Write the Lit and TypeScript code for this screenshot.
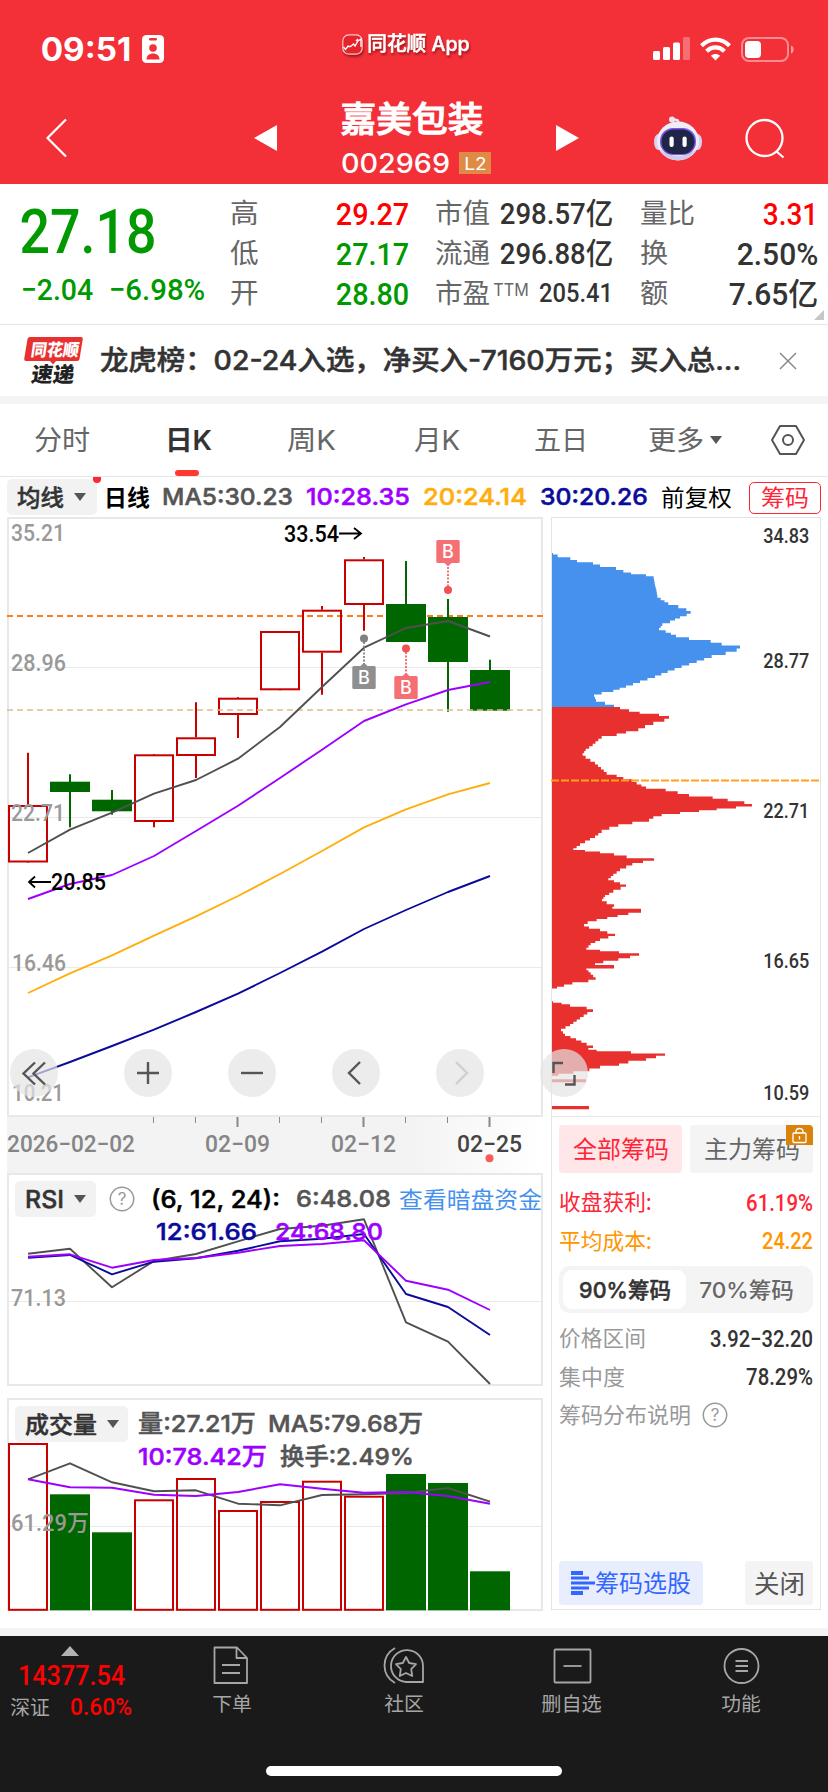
import { LitElement, html, svg, css } from "lit";
import { customElement } from "lit/decorators.js";

type Pt = [number, number];

/* A single line of text condensed or stretched to an exact width. */
const fit = (text: string, w: number, size: number, cls = "") => html`<svg
  class="fit ${cls}" width=${w} height=${size} viewBox="0 0 ${w} ${size}">
  <text x=${-0.04 * size} y=${size * 0.5 + size * 0.36} font-size=${size}
    textLength=${w + 0.08 * size} lengthAdjust="spacingAndGlyphs">${text}</text></svg>`;

/* Text inside a chart: left edge, cap-centre y, width, size. */
const label = (text: string, x: number, cy: number, w: number, size: number, cls = "") => svg`<text
  class=${cls} x=${x - 0.04 * size} y=${cy + size * 0.36} font-size=${size}
  textLength=${w + 0.08 * size} lengthAdjust="spacingAndGlyphs">${text}</text>`;

const X0 = 28;
const DX = 42;
const line = (ys: number[], cls: string) => svg`<polyline class="ln ${cls}" points=${ys
  .map((y, i) => `${X0 + i * DX},${y}`).join(" ")}></polyline>`;

/* up?, body top, body bottom, high, low */
const CANDLES: [boolean, number, number, number, number][] = [
  [true, 805, 862.5, 752.7, 862], [false, 781.7, 792, 774.3, 827.3], [false, 799.7, 811.3, 790, 814.7],
  [true, 754.3, 822, 755, 827.3], [true, 737.3, 756, 702.3, 778], [true, 697.7, 715, 697, 738],
  [true, 631, 690.3, 632, 690], [true, 609.7, 652.7, 606, 694.7], [true, 559.3, 605, 557, 630.7],
  [false, 604, 642, 561, 642], [false, 617, 662, 599, 711.7], [false, 670, 710.7, 659.7, 710],
];
const VOLUMES = [1443, 1494.3, 1532.3, 1499.3, 1478, 1510, 1501, 1480.7, 1495.7, 1474, 1483, 1571.3];

const MA5 = [853, 829.7, 812.7, 793.7, 780, 758.7, 727, 687, 647.7, 628, 621, 636.5];
const MA10 = [899, 884, 875, 856, 831, 805.7, 778, 749.7, 721, 704.3, 690, 682];
const MA20 = [993, 973.3, 955.3, 935.7, 916.3, 896, 874, 851, 827.3, 809.3, 794.3, 783];
const MA30 = [1077.3, 1062, 1046, 1029.7, 1012, 993.7, 973, 951.7, 929, 910, 892, 876];
const RSI6 = [1253.7, 1248.7, 1287.3, 1261, 1254, 1241.3, 1229, 1225.7, 1219.3, 1322.3, 1341.7, 1384];
const RSI12 = [1257.7, 1255, 1274.3, 1261.7, 1258.3, 1250.7, 1241.3, 1238.7, 1234, 1294, 1307, 1335];
const RSI24 = [1256.7, 1254.3, 1267.7, 1260, 1258, 1252.7, 1246, 1244, 1240.3, 1280.7, 1289.7, 1310];
const VMA5 = [1479.3, 1463.3, 1482.3, 1491.3, 1490.3, 1503.7, 1505.3, 1495, 1494.3, 1493, 1488, 1501.7];
const VMA10 = [1479.3, 1487.3, 1487.7, 1494.7, 1496, 1492, 1484.3, 1488.7, 1492.7, 1492, 1496, 1503.7];

/* Chip distribution, in thirds of a pixel: y, right edge. */
const CHIPS_UP: Pt[] = [[130, 24], [137, 38], [146, 76], [154, 96], [160, 144], [167, 165], [175, 213], [185, 235],
  [190, 258], [195, 303], [203, 326], [225, 330], [240, 334], [258, 337], [268, 347], [280, 370], [290, 400],
  [299, 424], [307, 437], [315, 425], [322, 405], [335, 375], [345, 352], [357, 342], [365, 362], [377, 393],
  [386, 432], [394, 497], [402, 530], [411, 585], [420, 575], [430, 542], [440, 500], [455, 455], [470, 410],
  [485, 368], [500, 330], [515, 285], [530, 243], [542, 205], [550, 170], [557, 147], [570, 153], [580, 180], [588, 207]];
const CHIPS_LOW: Pt[] = [[594, 225], [602, 252], [608, 284], [614, 342], [622, 372], [630, 358], [640, 325], [650, 300],
  [660, 280], [667, 243], [674, 215], [682, 170], [690, 160], [705, 143], [720, 122], [732, 113], [742, 122],
  [760, 150], [775, 168], [790, 185], [798, 215], [804, 235], [812, 262], [820, 275], [833, 303], [840, 362],
  [848, 398], [856, 432], [863, 503], [870, 548], [878, 598], [886, 621], [893, 573], [898, 515], [903, 462],
  [909, 405], [915, 350], [922, 325], [930, 312], [940, 262], [946, 220], [954, 193], [965, 170], [980, 150],
  [995, 120], [1005, 105], [1018, 85], [1022, 120], [1027, 165], [1033, 207], [1040, 245], [1049, 327], [1056, 294],
  [1062, 262], [1080, 225], [1095, 205], [1108, 190], [1113, 207], [1120, 225], [1127, 243], [1134, 227],
  [1145, 205], [1158, 180], [1170, 171], [1178, 185], [1187, 207], [1194, 202], [1199, 288], [1204, 288],
  [1212, 250], [1218, 218], [1224, 187], [1230, 155], [1237, 128], [1247, 117], [1252, 132], [1260, 165],
  [1267, 187], [1275, 210], [1281, 190], [1290, 165], [1302, 137], [1317, 124], [1321, 165], [1326, 222],
  [1334, 282], [1341, 255], [1348, 220], [1357, 175], [1363, 150], [1367, 207], [1373, 207], [1378, 124],
  [1390, 137], [1406, 152], [1413, 130], [1420, 82], [1427, 57], [1434, 36], [1437, 21], [1472, 21], [1476, 24],
  [1480, 50], [1486, 75], [1494, 125], [1502, 144], [1510, 127], [1525, 105], [1545, 75], [1560, 48], [1575, 60],
  [1588, 93], [1602, 125], [1611, 144], [1617, 130], [1621, 155], [1627, 258], [1634, 360], [1641, 333], [1648, 303],
  [1657, 250], [1664, 222], [1671, 165], [1680, 133], [1688, 85], [1695, 40], [1699, 21]];

const stepPath = (src: Pt[], top: number, bottom: number) => {
  const pts: Pt[] = [];
  src.forEach((p, i) => {
    pts.push(p);
    const n = src[i + 1];
    if (!n || n[0] - p[0] < 11 || (p[1] === 21 && n[1] === 21)) return;
    const k = Math.round((n[0] - p[0]) / 7.5);
    for (let j = 1; j < k; j++) pts.push([p[0] + ((n[0] - p[0]) * j) / k, p[1] + ((n[1] - p[1]) * j) / k]);
  });
  let d = `M552 ${top}`;
  pts.forEach((p, i) => {
    const x = 545 + p[1] / 3;
    const end = i < pts.length - 1 ? 510 + (p[0] + pts[i + 1][0]) / 6 : bottom;
    d += `H${x.toFixed(2)}V${end.toFixed(2)}`;
  });
  return d + "H552Z";
};

const caret = html`<svg class="caret" width="12" height="8" viewBox="0 0 12 8"><path d="M0 0H12L6 8Z" fill="#555"/></svg>`;
const help = html`<svg class="help" width="26" height="26" viewBox="0 0 26 26"><circle cx="13" cy="13" r="11.7" fill="none" stroke="#999" stroke-width="1.5"/><text x="13" y="19" text-anchor="middle" font-size="17" fill="#999" font-family="Inter">?</text></svg>`;

@customElement("app-root")
export class AppRoot extends LitElement {
  static styles = css`
    :host { display: block; width: 828px; height: 1792px; overflow: hidden; background: #fff; font-family: Inter, "Noto Sans CJK SC", sans-serif; color: #333; }
    * { box-sizing: border-box; }
    svg { display: block; overflow: visible; flex: none; }
    .fit text { fill: currentColor; }
    .num { font-family: Roboto, "Noto Sans CJK SC", sans-serif; font-weight: 500; }
    .cjk { font-family: "Noto Sans CJK SC", sans-serif; }
    .w5 { font-weight: 500; } .w6 { font-weight: 600; } .w7 { font-weight: 700; }
    .w55 { font-weight: 500; } .w55 text { stroke: currentColor; stroke-width: .5px; }
    .w58 { font-weight: 500; } .w58 text { stroke: currentColor; stroke-width: 1px; }
    .red { color: #ff0000; fill: #ff0000; } .green { color: #009900; } .dark { color: #333; fill: #333; } .gray { color: #666; }
    .c5 { color: #555; } .c10 { color: #9d00ff; } .c20 { color: #ffae0c; } .c30 { color: #0a0a9b; } .blk { color: #000; fill: #000; }
    .lite { color: #999; } .rose { color: #ff2436; } .amber { color: #ff9500; } .sky { color: #4691ee; }

    .top { height: 184px; background: #f32f38; color: #fff; }
    .status { height: 98px; display: grid; grid-template-columns: 100px 200px 311px 47px 41px 1fr; padding: 0 0 0 42px; align-items: center; }
    .apptag { display: flex; gap: 5px; align-items: center; margin-top: -10px; filter: drop-shadow(1px 2px 1px rgba(90,0,0,.55)); }
    .nav { height: 86px; display: grid; grid-template-columns: 207px 88px 214px 98px 48px 1fr; padding-left: 47px; }
    .nav > svg { margin-top: 27px; }
    .nav > .back { margin-top: 20px; }
    .nav > .robot { margin-top: 18px; }
    .nav > .find { margin-top: 20px; margin-left: 43px; }
    .ttl { display: flex; flex-direction: column; padding-top: 4px; gap: 15px; }
    .code { display: flex; gap: 10px; align-items: center; height: 22px; }
    .l2 { width: 32px; height: 22px; background: #e08b45; display: flex; align-items: center; justify-content: center; }

    .quote { height: 141px; border-bottom: 1px solid #e6e6e6; display: grid; grid-template-columns: 180px 177px 176px 176px; column-gap: 28.5px; padding-left: 22px; position: relative; }
    .px { padding-top: 17px; display: flex; flex-direction: column; gap: 12px; }
    .chg { display: flex; gap: 18px; }
    .col { padding-top: 9px; }
    .cell { height: 40px; display: flex; align-items: center; justify-content: space-between; }
    .ttm { margin: -7px 7px 0 -1px; }
    .corner { position: absolute; right: 4px; bottom: 4px; }

    .news { height: 71px; display: grid; grid-template-columns: 77px 679px 1fr; padding-left: 24px; align-items: center; }
    .band { height: 8px; background: #f4f4f4; }
    .tabs { height: 73px; border-bottom: 1px solid #e6e6e6; display: grid; grid-template-columns: 131px 122px 127px 120px 114px 122px 1fr; padding-left: 35px; align-items: center; position: relative; }
    .more { display: flex; gap: 7px; align-items: center; }
    .ind { position: absolute; left: 175px; bottom: 0; width: 24px; height: 6px; border-radius: 3px; background: #ff3b30; }
    .mas { height: 40px; display: grid; grid-template-columns: 98px 58px 144px 117px 117px 121px 87px 72px; padding-left: 7px; align-items: center; position: relative; }
    .sel { background: #f2f2f2; border-radius: 5px; height: 36px; display: flex; align-items: center; gap: 11px; padding-left: 11px; }
    .sel.s1 { width: 90px; } .sel.s2 { width: 81px; } .sel.s3 { width: 113px; }
    .dot { position: absolute; left: 93px; top: 0; width: 8px; height: 6px; background: #ff2436; border-radius: 0 0 4px 4px; }
    .pill { height: 32px; border: 1.5px solid #ff2436; border-radius: 5px; display: flex; align-items: center; justify-content: center; margin-top: 1px; }

    .main { display: grid; grid-template-columns: 536px 270px; column-gap: 8px; padding-left: 7px; height: 1111px; }
    .left { display: flex; flex-direction: column; }
    .panel { border: 2px solid #e8e8e8; position: relative; }
    .k { height: 600px; } .rsi { height: 213px; } .vol { height: 213px; margin-top: 12px; }
    .panel > svg.chart { margin: -2px; }
    .axis { height: 56px; background: linear-gradient(90deg, #f3f3f3 0 75%, #fff 100%); }
    .leg { position: absolute; left: 6px; top: 6px; display: flex; flex-direction: column; gap: 0; }
    .row { display: flex; align-items: center; height: 36px; }
    .row2 { display: flex; align-items: center; height: 29px; }
    .tools { position: absolute; left: 1px; top: 530px; display: flex; gap: 56px; z-index: 2; }
    .btn { width: 48px; height: 48px; border-radius: 50%; background: rgba(228,228,228,.7); }
    .tools .btn:first-child { margin-right: 10px; }
    .g1 { gap: 0; } .g1 .help { margin: 0 17px 0 13px; } .g1 .m1 { margin-right: 18px; } .g1 .m2 { margin-right: 10px; }
    .g2 { padding-left: 142px; gap: 20px; }
    .g3 { gap: 14px; } .g3 .sel { margin-right: -3px; }
    .g4 { padding-left: 124px; gap: 15px; margin-top: 1px; height: 27px; }
    .ln { fill: none; stroke-width: 1.9; stroke-linejoin: round; }
    .s5 { stroke: #505050; } .s10 { stroke: #9d00ff; } .s20 { stroke: #ffae0c; } .s30 { stroke: #0a0a9b; }
    .ax { fill: #999; font-family: Roboto, "Noto Sans CJK SC"; font-weight: 500; }
    .dt { fill: #858585; font-family: Roboto; font-weight: 500; } .dt.on { fill: #444; }
    .grid { stroke: #e9e9e9; stroke-width: 1; }
    .mk { font-family: Inter; font-weight: 500; fill: #fff; font-size: 18px; text-anchor: middle; }

    .right { border: 1px solid #e3e3e3; height: 1093px; display: flex; flex-direction: column; }
    .chips { height: 599px; border-bottom: 1px solid #e8e8e8; }
    .chips > svg { margin: -1px; }
    .info { flex: 1; padding: 8px 7px 4px 7px; display: flex; flex-direction: column; }
    .two { display: flex; gap: 8px; }
    .tab { width: 123px; height: 48px; border-radius: 4px; display: flex; align-items: center; justify-content: center; background: #f4f4f4; position: relative; }
    .tab.on { background: #ffe7e9; }
    .lock { position: absolute; right: 0; top: 0; width: 27px; height: 20px; background: #d9820c; border-radius: 0 4px 0 0; }
    .kv { display: flex; justify-content: space-between; align-items: center; height: 38.5px; padding: 0 1px; }
    .kvs { padding-top: 10px; }
    .seg { height: 47px; border-radius: 11px; background: #f4f4f4; display: flex; padding: 4px; margin: 6px 0 6px; align-items: center; }
    .segon { width: 123px; height: 39px; background: #fff; border-radius: 9px; display: flex; align-items: center; justify-content: center; margin-right: 14px; }
    .expl { justify-content: flex-start; gap: 12px; }
    .foot { margin-top: auto; display: flex; justify-content: space-between; }
    .pick { width: 144px; height: 44px; border-radius: 4px; background: #e8eefe; color: #3366ff; display: flex; align-items: center; padding-left: 12px; gap: 1px; }
    .close { width: 68px; height: 44px; border-radius: 4px; background: #f4f4f4; color: #555; display: flex; align-items: center; justify-content: center; }

    .bar { height: 156px; background: #1a1a1a; color: #a6a6a6; display: grid; grid-template-columns: 202px 171px 158px 180px 1fr; padding-left: 11px; position: relative; }
    .idx { padding-top: 10px; display: flex; flex-direction: column; }
    .idx .tri { margin-left: 50px; } .idx .v { margin: 6px 0 5px 8px; }
    .idx2 { display: flex; gap: 22px; align-items: center; }
    .idx2 .cjk { margin-top: 3px; }
    .it { padding-top: 10px; width: max-content; display: flex; flex-direction: column; align-items: center; gap: 9px; }
    .it svg { stroke-linejoin: round; }
    .home { position: absolute; left: 266px; top: 130px; width: 296px; height: 10px; border-radius: 5px; background: #fff; }
  `;

  private top() {
    return html`<div class="top">
      <div class="status">
        ${fit("09:51", 88, 32, "w7")}
        <svg width="22" height="28" viewBox="0 0 22 28"><rect width="22" height="28" rx="4.5" fill="#fff"/><rect x="7" y="3" width="8" height="2.6" rx="1.3" fill="#f32f38"/><circle cx="11" cy="13" r="3.8" fill="#f32f38"/><path d="M4.5 24.5c0-4 3-6 6.500-6s6.500 2 6.500 6z" fill="#f32f38"/></svg>
        <div class="apptag">
          <svg width="21" height="21" viewBox="0 0 21 21"><rect x=".8" y=".8" width="19.400" height="19.400" rx="6" fill="#e8222a" stroke="#fff" stroke-opacity=".75" stroke-width="1.2"/><path d="M1.500 13l2 2.500 3-4M6.500 12.500h2l3-2.500 1.500 2 3-5 3-2v8M14 7l2-2" fill="none" stroke="#fff" stroke-width="1.300"/></svg>
          ${fit("同花顺 App", 101, 20, "w55")}
        </div>
        <svg width="37" height="24" viewBox="0 0 37 24"><rect y="14" width="7" height="9" rx="1.500" fill="#fff"/><rect x="10" y="10" width="7" height="13" rx="1.500" fill="#fff"/><rect x="20" y="5.500" width="7" height="17.500" rx="1.500" fill="#fff"/><rect x="30" y="0" width="7" height="23" rx="1.500" fill="#fff" opacity=".3"/></svg>
        <svg width="31" height="24" viewBox="0 0 31 24" fill="none" stroke="#fff" stroke-width="4.200"><path d="M1.500 8.700C9.500 .6 21.500 .6 29.500 8.700"/><path d="M6.600 14.200c5.300-5.100 12.500-5.100 17.800 0"/><path d="M15.500 23.500l-4.600-4.800c2.700-2.300 6.500-2.300 9.200 0z" fill="#fff" stroke="none"/></svg>
        <svg width="54" height="25" viewBox="0 0 54 25"><rect x="1" y="1" width="46" height="23" rx="7" fill="none" stroke="#fff" stroke-opacity=".45" stroke-width="2"/><rect x="4" y="4" width="16" height="17" rx="4" fill="#fff"/><path d="M50 8.500c3.500 1 3.500 7 0 8z" fill="#fff" fill-opacity=".5"/></svg>
      </div>
      <div class="nav">
        <svg class="back" width="22" height="40" viewBox="0 0 22 40"><path d="M19 1.500L0.500 20L19 38.500" fill="none" stroke="#fff" stroke-width="2.200"/></svg>
        <svg width="23" height="26" viewBox="0 0 23 26"><path d="M23 0V26L0 13Z" fill="#fff"/></svg>
        <div class="ttl">${fit("嘉美包装", 140, 35, "cjk w58")}<div class="code">${fit("002969", 107, 27, "w5")}<span class="l2">${fit("L2", 21, 17)}</span></div></div>
        <svg width="23" height="26" viewBox="0 0 23 26"><path d="M0 0V26L23 13Z" fill="#fff"/></svg>
        <svg class="robot" width="48" height="46" viewBox="0 0 48 46">
          <path d="M24 8c1-4-1-5-6-4" fill="none" stroke="#e9e4f5" stroke-width="2.500"/><circle cx="18" cy="3.500" r="3" fill="#e9e4f5"/>
          <ellipse cx="4.500" cy="26" rx="4.500" ry="8" fill="#d8d2f2"/><ellipse cx="43.500" cy="26" rx="4.500" ry="8" fill="#d8d2f2"/>
          <ellipse cx="24" cy="25" rx="21" ry="19.500" fill="#efedf8"/><path d="M6 33c5 15 31 15 36 0c-8 9-28 9-36 0z" fill="#cfcaea"/>
          <rect x="6" y="12" width="36" height="27" rx="13" fill="#7b55e6"/><rect x="7.500" y="13.500" width="33" height="24.500" rx="12" fill="#1e2547"/>
          <rect x="15.500" y="20.500" width="4.200" height="10.500" rx="2.100" fill="#fff"/><rect x="28.500" y="20.500" width="4.200" height="10.500" rx="2.100" fill="#fff"/></svg>
        <svg class="find" width="40" height="42" viewBox="0 0 40 42" fill="none" stroke="#fff" stroke-width="2.300"><circle cx="19.500" cy="20" r="18"/><path d="M31.500 33.500L38.500 39.500"/></svg>
      </div>
    </div>`;
  }

  private quote() {
    const c = (a: unknown, b: unknown) => html`<div class="cell">${a}${b}</div>`;
    const l = (t: string) => fit(t, t.length * 26.5, 27, "cjk gray");
    return html`<div class="quote">
      <div class="px">${fit("27.18", 132, 61, "num green")}<div class="chg">${fit("−2.04", 70, 30, "num green")}${fit("−6.98%", 94, 30, "num green")}</div></div>
      <div class="col">${c(l("高"), fit("29.27", 71, 31, "num red"))}${c(l("低"), fit("27.17", 71, 31, "num green"))}${c(l("开"), fit("28.80", 71, 31, "num green"))}</div>
      <div class="col">${c(l("市值"), fit("298.57亿", 111, 30, "num"))}${c(l("流通"), fit("296.88亿", 111, 30, "num"))}<div class="cell">${l("市盈")}<span class="ttm">${fit("TTM", 34, 17, "gray")}</span>${fit("205.41", 72, 26, "num")}</div></div>
      <div class="col">${c(l("量比"), fit("3.31", 53, 31, "num red"))}${c(fit("换", 26, 27, "cjk gray"), fit("2.50%", 79, 31, "num"))}${c(fit("额", 26, 27, "cjk gray"), fit("7.65亿", 87, 31, "num"))}</div>
      <svg class="corner" width="10" height="10" viewBox="0 0 10 10"><path d="M10 0V10H0Z" fill="#c6c6c6"/></svg>
    </div>
    <div class="news">
      <svg width="60" height="50" viewBox="0 0 60 50"><path d="M6 1H57q2 0 1.800 2L55.500 23q-.3 2-2.500 2H32l-3 3.500L26 25H2q-2 0-1.800-2L3.500 3Q4 1 6 1z" fill="#e8302f"/>
        <g transform="skewX(-8)" font-family="Noto Sans CJK SC" font-weight="900"><text x="9" y="20" font-size="17" fill="#fff" textLength="48" lengthAdjust="spacingAndGlyphs">同花顺</text><text x="13" y="46" font-size="21" fill="#222" textLength="43" lengthAdjust="spacingAndGlyphs">速递</text></g></svg>
      ${fit("龙虎榜：02-24入选，净买入-7160万元；买入总...", 639, 27, "w55")}
      <svg width="16" height="16" viewBox="0 0 16 16"><path d="M0 0L16 16M16 0L0 16" stroke="#888" stroke-width="1.500"/></svg>
    </div>
    <div class="band"></div>`;
  }

  private tabs() {
    return html`<div class="tabs">
      ${fit("分时", 54, 27, "cjk gray")}${fit("日K", 45, 27, "w6 dark")}${fit("周K", 47, 27, "gray")}${fit("月K", 44, 27, "gray")}${fit("五日", 52, 27, "cjk gray")}
      <div class="more">${fit("更多", 54, 27, "cjk gray")}${caret}</div>
      <svg width="34" height="30" viewBox="0 0 34 30" fill="none" stroke="#555" stroke-width="2"><path d="M9 1H25L33 15L25 29H9L1 15Z" stroke-linejoin="round"/><circle cx="17" cy="15" r="5"/></svg>
      <i class="ind"></i>
    </div>
    <div class="mas">
      <div class="sel s1">${fit("均线", 45, 23, "cjk w55 dark")}${caret}</div>
      ${fit("日线", 44, 23, "cjk w7 blk")}${fit("MA5:30.23", 129, 23.5, "w55 c5")}${fit("10:28.35", 102, 23.5, "w55 c10")}${fit("20:24.14", 102, 23.5, "w55 c20")}${fit("30:20.26", 106, 23.5, "w55 c30")}${fit("前复权", 69, 23, "cjk blk")}
      <div class="pill rose">${fit("筹码", 46, 23, "cjk")}</div>
      <i class="dot"></i>
    </div>`;
  }

  private marker(cx: number, by: number, dy: number, fill: string, dotFill: string, above = false) {
    return svg`<line x1=${cx} x2=${cx} y1=${dy} y2=${above ? by + 23 : by} stroke=${fill} stroke-width="2" stroke-dasharray="2 1.5"/>
      <circle cx=${cx} cy=${dy} r="4" fill=${dotFill}/>
      <rect x=${cx - 11.7} y=${by} width="23.400" height="23" rx="1.500" fill=${fill}/>
      <path d=${above ? `M${cx - 3.500} ${by + 22.900}h7l-3.500 3.300z` : `M${cx - 3.500} ${by + 0.1}h7l-3.500 -3.300z`} fill=${fill}/>
      <text class="mk" x=${cx} y=${by + 18}>B</text>`;
  }

  private candles() {
    return html`<div class="panel k">
      <svg class="chart" width="536" height="600" viewBox="7 517 536 600">
        ${[667.5, 817.5, 967.5].map((y) => svg`<line class="grid" x1="9" x2="541" y1=${y} y2=${y}/>`)}
        <line x1="7" x2="543" y1="616" y2="616" stroke="#ff7f1e" stroke-width="1.800" stroke-dasharray="6 4"/>
        ${CANDLES.map(([up, t, b, h, l], i) => {
          const x = X0 + i * DX;
          return up
            ? svg`<g stroke="#c80000" stroke-width="2"><path d=${`M${x} ${h}V${t}M${x} ${b}V${l}`}/><rect x=${x - 19} y=${t + 1} width="38" height=${b - t - 2} fill="none"/></g>`
            : svg`<g fill="#006600"><rect x=${x - 1} y=${h} width="2" height=${l - h}/><rect x=${x - 20} y=${t} width="40" height=${b - t}/></g>`;
        })}
        <line x1="7" x2="541" y1="710" y2="710" stroke="#dcbf8f" stroke-width="1.500" stroke-dasharray="6 4"/>
        ${line(MA5, "s5")}${line(MA10, "s10")}${line(MA20, "s20")}${line(MA30, "s30")}
        ${label("35.21", 12, 532.5, 52, 23, "ax")}${label("28.96", 12, 662.5, 53, 23, "ax")}${label("22.71", 12, 812.5, 52, 23, "ax")}${label("16.46", 13, 962.5, 52, 23, "ax")}${label("10.21", 13, 1093, 50, 23, "ax")}
        ${label("33.54", 285, 533.5, 53, 23, "num blk")}<path d="M339 533.5H361M354 528L361 533.5L354 539" fill="none" stroke="#000" stroke-width="1.800"/>
        ${label("20.85", 52, 882, 53, 23, "num blk")}<path d="M51 882H29M35 876.500L29 882L35 887.500" fill="none" stroke="#000" stroke-width="1.800"/>
        ${this.marker(364, 666, 638.500, "#8f8f8f", "#808080")}${this.marker(406, 676, 648.500, "#f47072", "#f05254")}${this.marker(448, 540, 590, "#f47072", "#f05254", true)}
      </svg>
      <div class="tools">
        ${["M25 13.500L13.500 24.500L25 35.500M35 13.500L23.500 24.500L35 35.500", "M13 24H35M24 13V35", "M13 24H35", "M28 13L17 24L28 35", "M20 13L31 24L20 35", "M23 14H13.500V24M34.500 26V35.500H25"].map(
          (d, i) => html`<div class="btn"><svg width="48" height="48" viewBox="0 0 48 48"><path d=${d} fill="none" stroke=${i === 4 ? "#cfcfcf" : "#555"} stroke-width="2.400"/></svg></div>`)}
      </div>
    </div>
    <div class="axis"><svg width="536" height="56" viewBox="7 1117 536 56">
      ${[154, 196, 238, 280, 322, 364, 406, 448, 490].map((x, i) => svg`<line x1=${x - 0.5} x2=${x - 0.5} y1="1117" y2=${i % 3 === 2 ? 1127 : 1123} stroke="#888" stroke-width=${i % 3 === 2 ? 2 : 1}/>`)}
      ${label("2026−02−02", 8, 1144, 126, 23, "dt")}${label("02−09", 206, 1144, 63, 23, "dt")}${label("02−12", 332, 1144, 63, 23, "dt")}${label("02−25", 458, 1144, 63, 23, "dt on")}
      <circle cx="489.500" cy="1158.300" r="4" fill="#fb5a5c"/></svg></div>`;
  }

  private lower() {
    return html`<div class="panel rsi">
      <svg class="chart" width="536" height="213" viewBox="7 1173 536 213">
        <line class="grid" x1="9" x2="541" y1="1301.500" y2="1301.500"/>${label("71.13", 12, 1297.500, 53, 23, "ax")}
        ${line(RSI6, "s5")}${line(RSI12, "s30")}${line(RSI24, "s10")}</svg>
      <div class="leg">
        <div class="row g1"><div class="sel s2">${fit("RSI", 37, 24, "w55 dark")}${caret}</div>${help}<span class="m1">${fit("(6, 12, 24):", 127, 24, "w55 blk")}</span><span class="m2">${fit("6:48.08", 93, 23.5, "w55 c5")}</span>${fit("查看暗盘资金", 141, 23, "cjk sky")}</div>
        <div class="row2 g2">${fit("12:61.66", 99, 23.5, "w55 c30")}${fit("24:68.80", 106, 23.5, "w55 c10")}</div>
      </div>
    </div>
    <div class="panel vol">
      <svg class="chart" width="536" height="213" viewBox="7 1398 536 213">
        <line class="grid" x1="9" x2="541" y1="1526.500" y2="1526.500"/>
        ${VOLUMES.map((t, i) => {
          const x = X0 + i * DX;
          return CANDLES[i][0]
            ? svg`<rect x=${x - 19} y=${t + 1} width="38" height=${1608.8 - t} fill="none" stroke="#c80000" stroke-width="2"/>`
            : svg`<rect x=${x - 20} y=${t} width="40" height=${1610.3 - t} fill="#006600"/>`;
        })}
        ${line(VMA5, "s5")}${line(VMA10, "s10")}${label("61.29万", 12, 1522.500, 76, 23, "ax")}</svg>
      <div class="leg">
        <div class="row g3"><div class="sel s3">${fit("成交量", 70, 23, "cjk w55 dark")}${caret}</div>${fit("量:27.21万", 116, 23.5, "w55 c5")}${fit("MA5:79.68万", 153, 23.5, "w55 c5")}</div>
        <div class="row2 g4">${fit("10:78.42万", 127, 23.5, "w55 c10")}${fit("换手:2.49%", 132, 23.5, "w55 c5")}</div>
      </div>
    </div>`;
  }

  private side() {
    return html`<div class="right">
      <div class="chips"><svg width="270" height="599" viewBox="551 517 270 599">
        <path d=${stepPath(CHIPS_UP, 553, 707)} fill="#4691ee"/><path d=${stepPath(CHIPS_LOW, 707, 1077)} fill="#e8302f"/>
        <path d="M552 1079.300h34v3h-34zM552 1106h37v3.200h-37z" fill="#e8302f"/>
        <line x1="551" x2="819" y1="780.500" y2="780.500" stroke="#ffa01e" stroke-width="2" stroke-dasharray="8 2"/>
        ${([["34.83", 536.3], ["28.77", 660.5], ["22.71", 810.5], ["16.65", 960.5], ["10.59", 1092.5]] as [string, number][]).map(([t, y]) => label(t, 764, y, 44.5, 19.500, "num dark"))}
      </svg></div>
      <div class="info">
        <div class="two"><div class="tab on">${fit("全部筹码", 94, 24, "cjk rose")}</div><div class="tab">${fit("主力筹码", 94, 24, "cjk gray")}
          <span class="lock"><svg width="27" height="20" viewBox="0 0 27 20" fill="none" stroke="#fff" stroke-width="1.300"><rect x="7" y="8" width="13" height="9.500" rx="1"/><path d="M10 8V6.500a3.500 3 0 0 1 7 0V8M13.500 11V14.500"/></svg></span></div></div>
        <div class="kvs">
          <div class="kv rose">${fit("收盘获利:", 91, 22, "cjk")}${fit("61.19%", 65, 23, "num")}</div>
          <div class="kv amber">${fit("平均成本:", 91, 22, "cjk")}${fit("24.22", 49, 23, "num")}</div>
        </div>
        <div class="seg"><span class="segon">${fit("90%筹码", 90, 22, "w55")}</span>${fit("70%筹码", 93, 22, "w5 gray")}</div>
        <div class="kv">${fit("价格区间", 85, 22, "cjk lite")}${fit("3.92−32.20", 101, 23, "num")}</div>
        <div class="kv">${fit("集中度", 64, 22, "cjk lite")}${fit("78.29%", 65, 23, "num")}</div>
        <div class="kv expl">${fit("筹码分布说明", 130, 22, "cjk lite")}${help}</div>
        <div class="foot">
          <div class="pick"><svg width="24" height="24" viewBox="0 0 24 24"><path d="M0 0h12v4H0zM0 5.500h18v3H0zM0 10.500h24v3H0zM0 15.500h18v3H0zM0 20h12v4H0z" fill="#3366ff"/></svg>${fit("筹码选股", 94, 24, "cjk")}</div>
          <div class="close">${fit("关闭", 49, 25, "cjk")}</div>
        </div>
      </div>
    </div>`;
  }

  private bar() {
    return html`<div class="band"></div><div class="bar">
      <div class="idx"><svg class="tri" width="18" height="10" viewBox="0 0 18 10"><path d="M9 0L18 10H0Z" fill="#b3b3b3"/></svg>
        <div class="v">${fit("14377.54", 105, 27, "num red")}</div>
        <div class="idx2">${fit("深证", 38, 20, "cjk")}${fit("0.60%", 60, 24, "num red")}</div></div>
      <div class="it"><svg width="38" height="39" viewBox="0 0 38 39" fill="none" stroke="#a6a6a6" stroke-width="1.800"><path d="M1.500 1.500H24L34 12V37H1.500ZM23.500 1.500V12H34M9 19H27M9 27H27"/></svg>${fit("下单", 38, 19.5, "cjk")}</div>
      <div class="it"><svg width="40" height="39" viewBox="0 0 40 39" fill="none" stroke="#a6a6a6" stroke-width="1.800"><path d="M11 2C-3 10-3 29 11 37M39 20.500V36H22A16 16 0 1 1 39 20.500Z"/><path d="M22 11l3.200 6 6.800 1.200-4.800 4.900 1 6.900-6.200-3-6.200 3 1-6.900-4.800-4.900 6.800-1.200z"/></svg>${fit("社区", 38, 19.5, "cjk")}</div>
      <div class="it"><svg width="38" height="39" viewBox="0 0 38 39" fill="none" stroke="#a6a6a6" stroke-width="1.800"><rect x="1.500" y="3.500" width="36" height="33" rx="1"/><path d="M10.500 20H28.500"/></svg>${fit("删自选", 59, 19.5, "cjk")}</div>
      <div class="it"><svg width="38" height="39" viewBox="0 0 38 39" fill="none" stroke="#a6a6a6" stroke-width="1.800"><circle cx="19.500" cy="20" r="17"/><path d="M13.500 15H26M13.500 20H26M13.500 25H26"/></svg>${fit("功能", 38, 19.5, "cjk")}</div>
      <i class="home"></i>
    </div>`;
  }

  render() {
    return html`${this.top()}${this.quote()}${this.tabs()}
      <div class="main"><div class="left">${this.candles()}${this.lower()}</div>${this.side()}</div>${this.bar()}`;
  }
}
